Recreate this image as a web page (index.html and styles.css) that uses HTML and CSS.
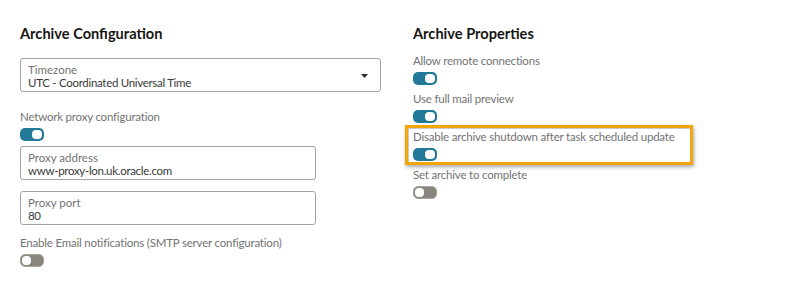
FILE: index.html
```html
<!DOCTYPE html>
<html lang="en">
<head>
<meta charset="utf-8">
<title>Archive settings</title>
<link rel="stylesheet" href="styles.css">
</head>
<body>
<div class="page">
  <section class="col col-left">
    <h2 class="heading">Archive Configuration</h2>
    <div class="box select">
      <div class="box-label">Timezone</div>
      <div class="box-value">UTC - Coordinated Universal Time</div>
      <svg class="caret" width="7" height="4" viewBox="0 0 7 4"><path d="M0 0H7L3.5 4Z" fill="#2b2b2b"/></svg>
    </div>
    <div class="field field-network">
      <div class="field-label">Network proxy configuration</div>
      <span class="toggle on"><span class="knob"></span></span>
    </div>
    <div class="box input input-address">
      <div class="box-label">Proxy address</div>
      <div class="box-value">www-proxy-lon.uk.oracle.com</div>
    </div>
    <div class="box input input-port">
      <div class="box-label">Proxy port</div>
      <div class="box-value">80</div>
    </div>
    <div class="field field-email">
      <div class="field-label">Enable Email notifications (SMTP server configuration)</div>
      <span class="toggle off"><span class="knob"></span></span>
    </div>
  </section>
  <section class="col col-right">
    <h2 class="heading">Archive Properties</h2>
    <div class="fields">
      <div class="field">
        <div class="field-label">Allow remote connections</div>
        <span class="toggle on"><span class="knob"></span></span>
      </div>
      <div class="field">
        <div class="field-label">Use full mail preview</div>
        <span class="toggle on"><span class="knob"></span></span>
      </div>
      <div class="field highlighted">
        <div class="field-label">Disable archive shutdown after task scheduled update</div>
        <span class="toggle on"><span class="knob"></span></span>
      </div>
      <div class="field">
        <div class="field-label">Set archive to complete</div>
        <span class="toggle off"><span class="knob"></span></span>
      </div>
    </div>
  </section>
</div>
</body>
</html>
```
FILE: styles.css
```css
* { box-sizing: border-box; }
html, body { margin: 0; background: #fff; }
body {
  font-family: Lato, "Noto Sans", sans-serif;
  color: #333;
}
.page {
  display: flex;
  gap: 32px;
  padding: 24px 20px 0;
}
.col-left { width: 361px; }
.col-right { width: 300px; }
.heading {
  margin: 0;
  font-size: 14.6px;
  line-height: 20px;
  font-weight: 700;
  color: #161513;
}
.box {
  position: relative;
  height: 34px;
  border: 1px solid #a3a3a3;
  border-radius: 3px;
  padding: 5px 7px 0;
}
.select { margin-top: 14px; width: 361px; }
.input { width: 296px; }
.input-address { margin-top: 5px; }
.input-port { margin-top: 11px; }
.box-label {
  font-size: 11.5px;
  line-height: 12px;
  color: #737373;
}
.box-value {
  font-size: 11.5px;
  line-height: 14px;
  letter-spacing: -0.3px;
  color: #3a3a3a;
}
.caret {
  position: absolute;
  right: 12px;
  top: 15px;
  display: block;
}
.field { display: flex; flex-direction: column; align-items: flex-start; }
.field-label {
  font-size: 11.5px;
  line-height: 16px;
  letter-spacing: -0.2px;
  color: #737373;
  white-space: nowrap;
}
.field-network { margin-top: 17px; }
.field-email { margin-top: 10px; }
.fields { display: flex; flex-direction: column; gap: 6px; margin-top: 9px; }
.toggle {
  display: flex;
  align-items: center;
  margin-top: 3px;
  width: 24px;
  height: 13px;
  border-radius: 5px;
  padding: 0 2px;
}
.toggle.on { background: #227a98; justify-content: flex-end; }
.toggle.off { background: #8b8580; border: 1px solid #a9a39e; padding: 0 1px; }
.knob {
  width: 10px;
  height: 9px;
  border-radius: 4px;
  background: #fff;
}
.toggle.off .knob { width: 9px; }
.highlighted { position: relative; }
.highlighted::after {
  content: "";
  position: absolute;
  left: -8px;
  top: -4px;
  width: 282px;
  bottom: -4px;
  border: 3px solid #f2a60c;
  box-shadow: inset 1px 1px 0 #c9c9c9, 1px 2px 4px rgba(0, 0, 0, 0.35);
  pointer-events: none;
}
```
